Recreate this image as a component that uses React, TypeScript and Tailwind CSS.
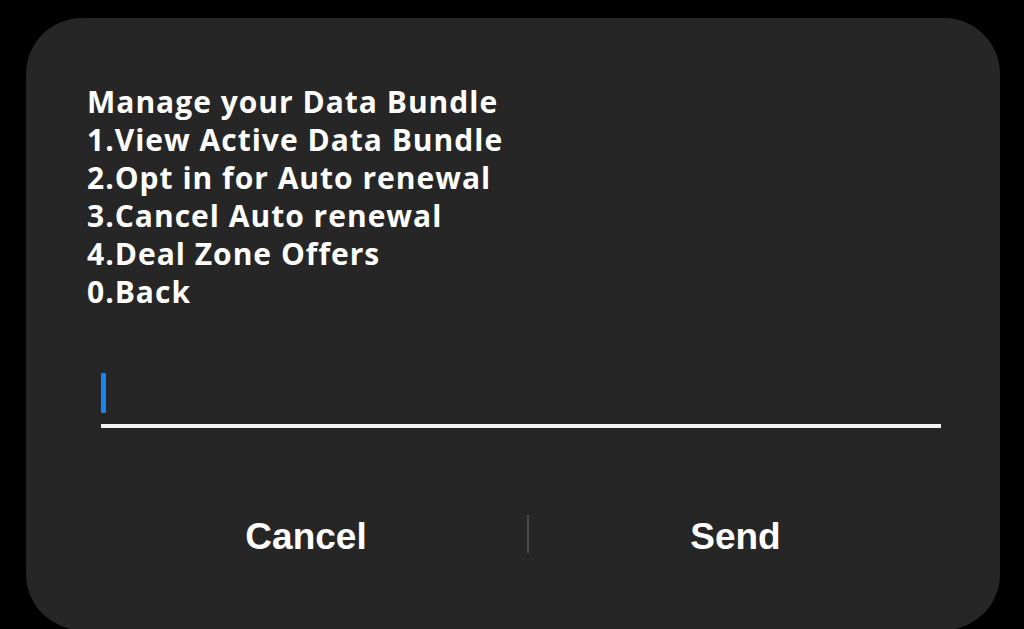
import React from "react";

const lines = [
  "Manage your Data Bundle",
  "1.View Active Data Bundle",
  "2.Opt in for Auto renewal",
  "3.Cancel Auto renewal",
  "4.Deal Zone Offers",
  "0.Back",
];

export default function App() {
  return (
    <div className="w-[1024px] h-[629px] bg-black overflow-hidden pt-[18px] pl-[26px]">
      <div className="w-[974px] h-[612px] rounded-[56px] bg-[#262626] flex flex-col">
        <div
          className="ml-[61px] mt-[65px] text-white text-[30px] leading-[38px] font-bold tracking-[1px]"
          style={{ fontFamily: '"Open Sans", "Noto Sans", sans-serif' }}
        >
          {lines.map((l) => (
            <div key={l}>{l}</div>
          ))}
        </div>
        <div className="ml-[75px] mr-[59px] mt-[62px] flex flex-col">
          <div className="w-[5px] h-[40px] bg-[#1786f0] rounded-[1px]" />
          <div className="mt-[11px] h-[4px] bg-[#f4f4f4]" />
        </div>
        <div
          className="ml-[59px] mr-[58px] mt-[79px] h-[60px] flex items-center text-white font-bold text-[37px]"
          style={{ fontFamily: '"Liberation Sans", Arial, sans-serif' }}
        >
          <div className="w-[442px] text-center">Cancel</div>
          <div className="w-[2px] h-[38px] bg-[#4a4a4a] mb-[6px]" />
          <div className="flex-1 text-center">Send</div>
        </div>
      </div>
    </div>
  );
}
